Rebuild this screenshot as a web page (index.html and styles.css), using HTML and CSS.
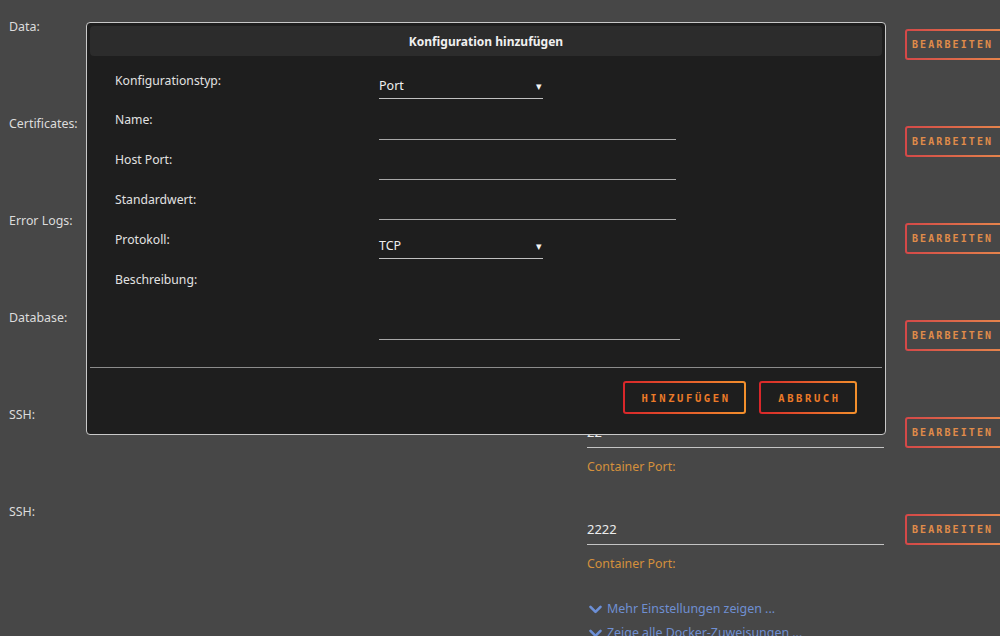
FILE: index.html
```html
<!DOCTYPE html>
<html lang="de">
<head>
<meta charset="utf-8">
<title>Konfiguration hinzufügen</title>
<link rel="stylesheet" href="styles.css">
</head>
<body>
<div class="page">
  <div class="row">
    <div class="row-label">Data:</div>
    <div class="row-field"><div class="value-line">/data</div><div class="sub-label">Container Pfad:</div></div>
    <button class="edit-btn">BEARBEITEN</button>
  </div>
  <div class="row">
    <div class="row-label">Certificates:</div>
    <div class="row-field"><div class="value-line">/certs</div><div class="sub-label">Container Pfad:</div></div>
    <button class="edit-btn">BEARBEITEN</button>
  </div>
  <div class="row">
    <div class="row-label">Error Logs:</div>
    <div class="row-field"><div class="value-line">/logs</div><div class="sub-label">Container Pfad:</div></div>
    <button class="edit-btn">BEARBEITEN</button>
  </div>
  <div class="row">
    <div class="row-label">Database:</div>
    <div class="row-field"><div class="value-line">/db</div><div class="sub-label">Container Pfad:</div></div>
    <button class="edit-btn">BEARBEITEN</button>
  </div>
  <div class="row">
    <div class="row-label">SSH:</div>
    <div class="row-field"><div class="value-line">22</div><div class="sub-label">Container Port:</div></div>
    <button class="edit-btn">BEARBEITEN</button>
  </div>
  <div class="row">
    <div class="row-label">SSH:</div>
    <div class="row-field"><div class="value-line">2222</div><div class="sub-label">Container Port:</div></div>
    <button class="edit-btn">BEARBEITEN</button>
  </div>
  <div class="links">
    <div class="link">
      <svg class="chev" width="13" height="9" viewBox="0 0 13 9"><polyline points="1.5,1.8 6.5,6.8 11.5,1.8" fill="none" stroke="#6c8fd6" stroke-width="2.6" stroke-linecap="round" stroke-linejoin="round"/></svg>
      <span>Mehr Einstellungen zeigen ...</span>
    </div>
    <div class="link">
      <svg class="chev" width="13" height="9" viewBox="0 0 13 9"><polyline points="1.5,1.8 6.5,6.8 11.5,1.8" fill="none" stroke="#6c8fd6" stroke-width="2.6" stroke-linecap="round" stroke-linejoin="round"/></svg>
      <span>Zeige alle Docker-Zuweisungen ...</span>
    </div>
  </div>
</div>

<div class="modal">
  <div class="modal-header">Konfiguration hinzufügen</div>
  <div class="modal-form">
    <div class="frow">
      <div class="flabel">Konfigurationstyp:</div>
      <div class="select"><span>Port</span><span class="arrow">▾</span></div>
    </div>
    <div class="frow">
      <div class="flabel">Name:</div>
      <div class="input"></div>
    </div>
    <div class="frow">
      <div class="flabel">Host Port:</div>
      <div class="input"></div>
    </div>
    <div class="frow">
      <div class="flabel">Standardwert:</div>
      <div class="input"></div>
    </div>
    <div class="frow">
      <div class="flabel">Protokoll:</div>
      <div class="select"><span>TCP</span><span class="arrow">▾</span></div>
    </div>
    <div class="frow frow-tall">
      <div class="flabel">Beschreibung:</div>
      <div class="textarea"></div>
    </div>
  </div>
  <div class="modal-divider"></div>
  <div class="modal-footer">
    <button class="grad-btn add">HINZUFÜGEN</button>
    <button class="grad-btn cancel">ABBRUCH</button>
  </div>
</div>
</body>
</html>
```
FILE: styles.css
```css
html, body {
  margin: 0;
  padding: 0;
}
body {
  background: #474747;
  font-family: "Noto Sans", "Open Sans", sans-serif;
  font-size: 12px;
  color: #dcdcdc;
  width: 1000px;
  height: 636px;
  overflow: hidden;
  position: relative;
}
.page {
  padding: 19px 0 0 9px;
}
.row {
  display: grid;
  grid-template-columns: 578px 297px 1fr;
  height: 97px;
  align-items: start;
}
.row-label {
  line-height: 16px;
  font-size: 12.4px;
  color: #dcdcdc;
}
.row-field {
  padding-top: 10px;
}
.value-line {
  height: 30px;
  border-bottom: 1px solid #c4c4c4;
  display: flex;
  align-items: center;
  font-size: 13px;
  color: #ececec;
}
.sub-label {
  margin-top: 11px;
  line-height: 16px;
  font-size: 12.4px;
  color: #d4903c;
}
.edit-btn {
  margin: 10px 0 0 21px;
  height: 31px;
  width: 112px;
  border: 2px solid transparent;
  border-radius: 3px;
  background: linear-gradient(#474747, #474747) padding-box,
              linear-gradient(90deg, #d44848, #e88e4c) border-box;
  color: #e08c4a;
  font-family: "DejaVu Sans Mono", monospace;
  font-weight: bold;
  font-size: 10px;
  letter-spacing: 2.1px;
  text-align: left;
  padding: 0 0 0 5px;
}
.links {
  padding-left: 578px;
}
.link {
  display: flex;
  align-items: center;
  gap: 5px;
  height: 16px;
  line-height: 16px;
  margin-bottom: 8px;
  font-size: 12.4px;
  color: #6f8fd2;
  padding-left: 2px;
}
.chev {
  display: block;
}

/* Modal */
.modal {
  position: absolute;
  left: 86px;
  top: 22px;
  width: 792px;
  padding: 3px;
  border: 1px solid #c9c9c9;
  border-radius: 4px;
  background: #1e1e1e;
}
.modal-header {
  height: 30px;
  background: #2c2c2c;
  border-radius: 4px;
  display: flex;
  align-items: center;
  justify-content: center;
  font-weight: bold;
  color: #f0f0f0;
}
.modal-form {
  padding: 16px 0 0 25px;
}
.frow {
  display: grid;
  grid-template-columns: 264px auto;
  height: 40px;
  align-items: start;
}
.frow:first-child .flabel {
  padding-top: 1px;
}
.frow-tall {
  height: 69px;
}
.flabel {
  line-height: 16px;
  font-size: 12.2px;
  color: #e2e2e2;
}
.select {
  width: 164px;
  height: 26px;
  border-bottom: 1px solid #c0c0c0;
  display: flex;
  align-items: center;
  justify-content: space-between;
  color: #f0f0f0;
  font-size: 12.5px;
}
.arrow {
  font-size: 11px;
  margin-right: 1px;
  color: #f4f4f4;
}
.input {
  width: 297px;
  height: 27px;
  border-bottom: 1px solid #a8a8a8;
}
.textarea {
  width: 301px;
  height: 67px;
  border-bottom: 1px solid #a8a8a8;
}
.modal-divider {
  height: 1px;
  background: #8c8c8c;
  margin-top: 26px;
}
.modal-footer {
  display: flex;
  justify-content: flex-end;
  gap: 13px;
  padding: 13px 25px 17px 0;
}
.grad-btn {
  height: 33px;
  border: 2px solid transparent;
  border-radius: 3px;
  background: linear-gradient(#1e1e1e, #1e1e1e) padding-box,
              linear-gradient(90deg, #d8262a, #f3902c) border-box;
  color: #ec7a28;
  font-family: "DejaVu Sans Mono", monospace;
  font-weight: bold;
  font-size: 10.5px;
  letter-spacing: 2.6px;
  padding: 0 0 0 3px;
}
.grad-btn.add {
  width: 123px;
}
.grad-btn.cancel {
  width: 98px;
}
```
